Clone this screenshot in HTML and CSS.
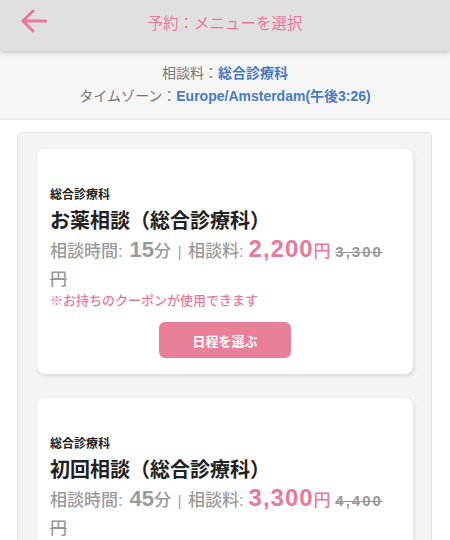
FILE: index.html
```html
<!DOCTYPE html>
<html lang="ja">
<head>
    <meta charset="UTF-8">
    <meta name="viewport" content="width=device-width, initial-scale=1.0">
    <title>予約：メニューを選択</title>
    <link rel="stylesheet" href="styles.css">
</head>
<body>
    <header class="topbar">
        <a class="back" href="#" aria-label="戻る">
            <svg width="26" height="26" viewBox="0 0 26 26">
                <path d="M2 12 H25 M12 2 L2 12 L12 22" fill="none" stroke="#e8799a" stroke-width="3" stroke-linecap="round" stroke-linejoin="round"/>
            </svg>
        </a>
        <h1 class="topbar-title">予約：メニューを選択</h1>
        <span class="spacer"></span>
    </header>

    <section class="summary">
        <p>相談料：<strong>総合診療科</strong></p>
        <p>タイムゾーン：<strong class="tz">Europe/Amsterdam(午後3:26)</strong></p>
    </section>

    <main class="menu-list">
        <div class="menu-card">
            <p class="dept">総合診療科</p>
            <h2 class="menu-name">お薬相談（総合診療科）</h2>
            <p class="meta">
                <span>相談時間:</span> <span class="num">15</span><span>分</span> <span class="sep">|</span> <span>相談料:</span> <span class="price">2,200</span><span class="yen">円</span> <s class="old"><span class="old-num">3,300</span>円</s>
            </p>
            <p class="coupon">※お持ちのクーポンが使用できます</p>
            <div class="actions">
                <button class="pick">日程を選ぶ</button>
            </div>
        </div>

        <div class="menu-card">
            <p class="dept">総合診療科</p>
            <h2 class="menu-name">初回相談（総合診療科）</h2>
            <p class="meta">
                <span>相談時間:</span> <span class="num">45</span><span>分</span> <span class="sep">|</span> <span>相談料:</span> <span class="price">3,300</span><span class="yen">円</span> <s class="old"><span class="old-num">4,400</span>円</s>
            </p>
            <p class="coupon">※お持ちのクーポンが使用できます</p>
            <div class="actions">
                <button class="pick">日程を選ぶ</button>
            </div>
        </div>
    </main>
</body>
</html>
```

FILE: styles.css
```css
* {
    box-sizing: border-box;
}
body {
    margin: 0;
    background: #fff;
    font-family: "Liberation Sans", "Noto Sans CJK JP", sans-serif;
    color: #222;
    height: 540px;
    overflow: hidden;
}
p, h1, h2 {
    margin: 0;
}
.topbar {
    position: relative;
    z-index: 2;
    height: 51px;
    padding-bottom: 8px;
    display: grid;
    grid-template-columns: 60px 1fr 60px;
    align-items: center;
    background: #e0e0e0;
    box-shadow: 0 2px 4px rgba(0,0,0,0.18);
}
.back {
    display: flex;
    padding-left: 21px;
}
.topbar-title {
    text-align: center;
    font-size: 15.5px;
    font-weight: normal;
    color: #e8799a;
}
.summary {
    padding: 11px 0 10px;
    background: #f5f5f5;
    border-bottom: 2px solid #ebebeb;
    text-align: center;
    font-size: 14px;
    line-height: 23px;
    color: #777;
}
.summary strong {
    color: #4b7bbf;
}
.menu-list {
    margin: 12px 18px 0 17px;
    padding: 16px 18px 30px 19px;
    background: #f4f4f4;
    border: 1px solid #e6e6e6;
    border-radius: 5px;
    display: flex;
    flex-direction: column;
    gap: 24px;
}
.menu-card {
    padding: 37px 22px 16px 13px;
    background: #fff;
    border-radius: 8px;
    box-shadow: 1px 2px 4px rgba(0,0,0,0.12);
}
.dept {
    font-size: 12px;
    line-height: 18px;
    font-weight: bold;
}
.menu-name {
    margin-top: 4px;
    font-size: 20px;
    line-height: 26px;
    font-weight: 600;
}
.meta {
    margin-top: 1px;
    font-size: 17px;
    line-height: 27px;
    color: #9b9b9b;
    font-weight: 500;
}
.meta span, .meta s {
    line-height: 27px;
}
.num {
    font-size: 22px;
    font-weight: bold;
    margin-left: 2px;
}
.sep {
    font-size: 14px;
    margin: 0 2px;
}
.price {
    font-size: 24px;
    font-weight: bold;
    letter-spacing: 1px;
    color: #e8799a;
}
.yen {
    color: #e8799a;
}
.old {
    color: #999;
}
.old-num {
    font-size: 15px;
    font-weight: bold;
    letter-spacing: 2px;
}
.coupon {
    font-size: 13px;
    line-height: 16px;
    font-weight: 500;
    color: #e8799a;
}
.actions {
    display: flex;
    justify-content: center;
    margin-top: 13px;
    margin-right: -9px;
}
.pick {
    width: 132px;
    height: 36px;
    border: none;
    border-radius: 6px;
    background: #e8809a;
    color: #fff;
    font-family: inherit;
    font-size: 13px;
    font-weight: bold;
    cursor: pointer;
}
```
